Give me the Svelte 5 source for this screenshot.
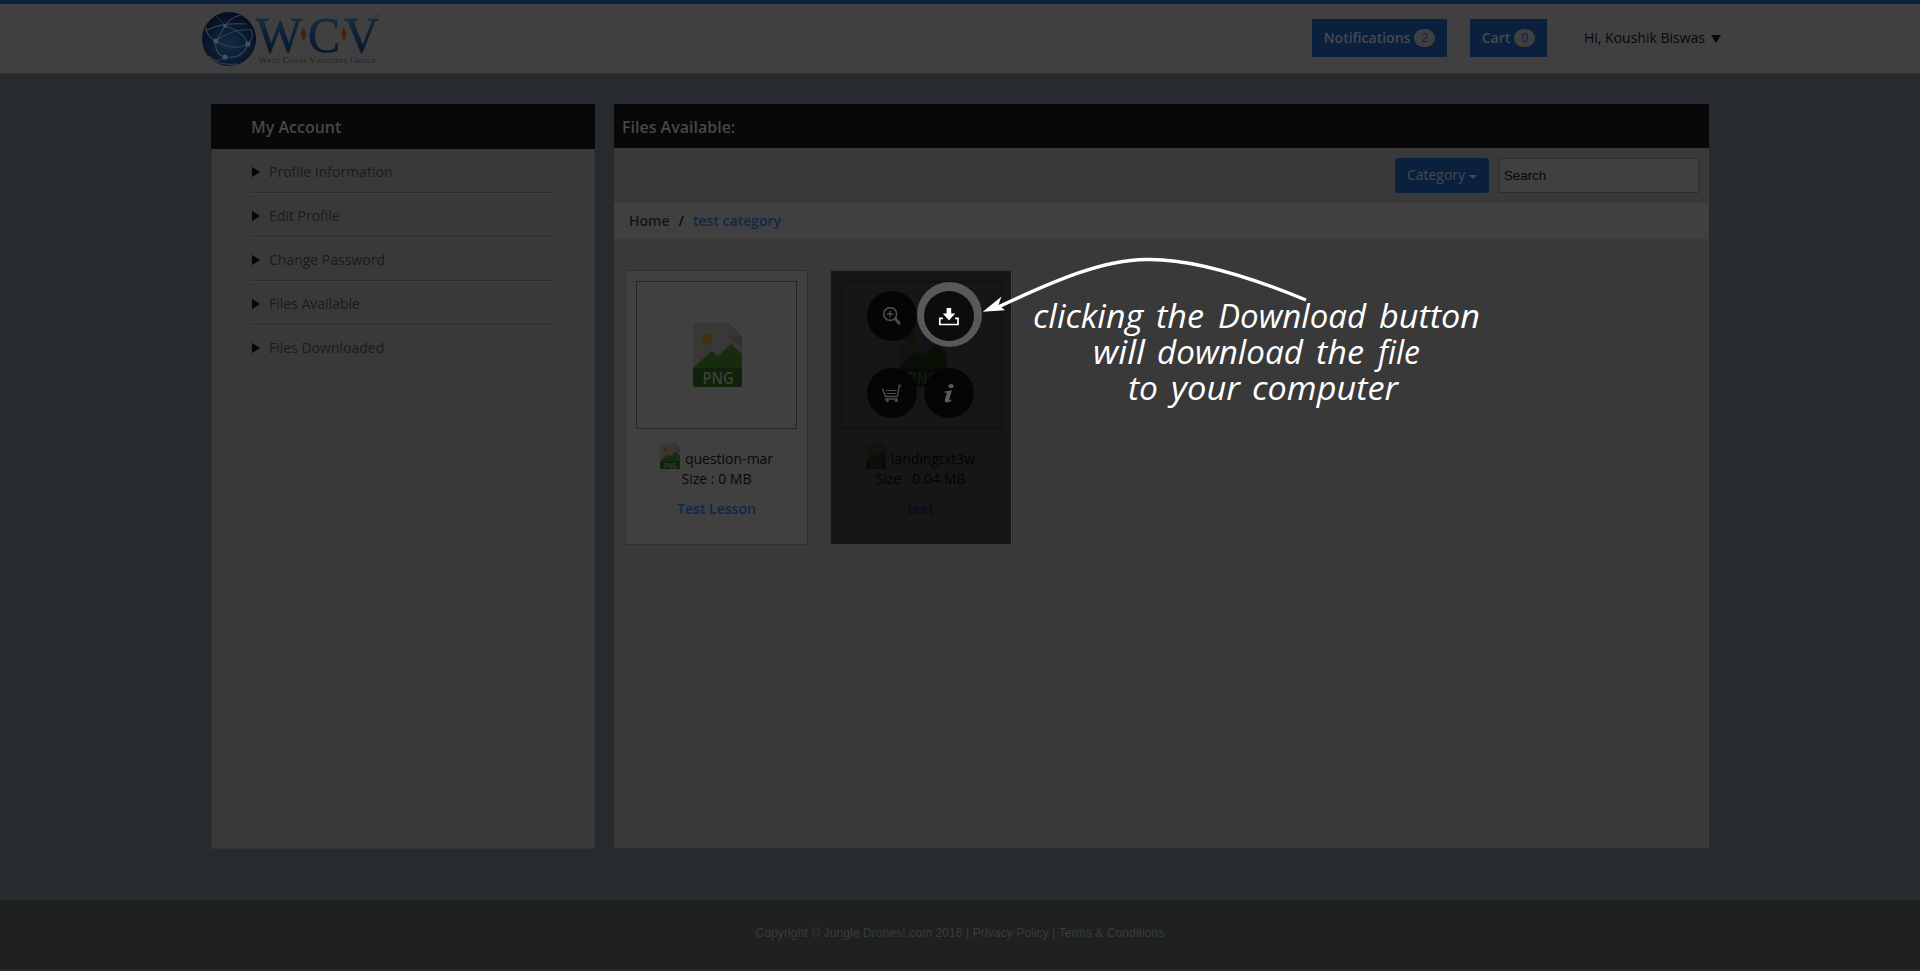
<script>
  const menu = ['Profile Information', 'Edit Profile', 'Change Password', 'Files Available', 'Files Downloaded'];

  const files = [
    { name: 'question-mar', size: '0 MB', lesson: 'Test Lesson', active: false },
    { name: 'landingtxt3w', size: '0.04 MB', lesson: 'test', active: true }
  ];

  const words = [
    { t: 'clicking', x: 1033, y: 328, w: 110 },
    { t: 'the', x: 1156, y: 328, w: 48 },
    { t: 'Download', x: 1218, y: 328, w: 148 },
    { t: 'button', x: 1379, y: 328, w: 101 },
    { t: 'will', x: 1093, y: 364, w: 52 },
    { t: 'download', x: 1157, y: 364, w: 146 },
    { t: 'the', x: 1316, y: 364, w: 48 },
    { t: 'file', x: 1378, y: 364, w: 42 },
    { t: 'to', x: 1128, y: 400, w: 30 },
    { t: 'your', x: 1171, y: 400, w: 69 },
    { t: 'computer', x: 1252, y: 400, w: 146 }
  ];
</script>

{#snippet png(cls)}
  <svg class={cls} viewBox="0 0 49 64">
    <path d="M2 0H36L49 13V45H0V2Q0 0 2 0Z" fill="#393837" />
    <path d="M35 0L49 14V24L35 14Z" fill="#302f2e" />
    <path d="M35 0L49 14H37Q35 14 35 12Z" fill="#373635" />
    <circle cx="14" cy="16" r="5.3" fill="#3f310d" />
    <path d="M0 45L19 28L25 33L38 21L49 31V46H0Z" fill="#172b0f" />
    <path d="M0 45H49V62Q49 64 47 64H2Q0 64 0 62Z" fill="#10230a" />
    <text x="9.5" y="60.5" textLength="31" lengthAdjust="spacingAndGlyphs">PNG</text>
  </svg>
{/snippet}

<div class="page">
  <header>
    <svg class="logo" viewBox="200 8 182 60">
      <defs>
        <radialGradient id="globe" cx=".5" cy=".6" r=".55">
          <stop offset="0" stop-color="#122d42" />
          <stop offset=".6" stop-color="#0a1c33" />
          <stop offset="1" stop-color="#060e20" />
        </radialGradient>
        <linearGradient id="ink" x1="0" y1="0" x2="0" y2="1">
          <stop offset=".15" stop-color="#173445" />
          <stop offset=".5" stop-color="#0b2036" />
          <stop offset=".85" stop-color="#09182b" />
        </linearGradient>
      </defs>
      <circle cx="229" cy="39" r="27" fill="url(#globe)" />
      <g fill="none" stroke="#35414b" stroke-width="1.2">
        <path d="M205 31Q222 22 246 24M216 41L225 26M216 41Q232 28 251 30M216 41Q232 52 248 44M225 26Q242 30 248 44M216 41Q206 36 206 27M216 41Q214 54 225 57M225 57Q242 60 248 44M225 26Q229 18 241 15M248 44Q255 38 251 29M209 56Q217 66 238 64" />
        <path d="M225 26Q220 18 216 17M225 57Q219 63 213 59" stroke-width=".8" />
      </g>
      <g fill="#46525a">
        <circle cx="216" cy="41" r="2.6" /><circle cx="225" cy="26" r="1.8" />
        <circle cx="248" cy="44" r="2.6" /><circle cx="225" cy="57" r="2.6" />
      </g>
      <g class="wcv">
        <text x="256" y="52" textLength="46" lengthAdjust="spacingAndGlyphs">W</text>
        <text x="308" y="52" textLength="32" lengthAdjust="spacingAndGlyphs">C</text>
        <text x="344" y="52" textLength="35" lengthAdjust="spacingAndGlyphs">V</text>
      </g>
      <path d="M303.5 27L306.5 34L303.5 41L300.5 34ZM344 27L347 34L344 41L341 34Z" fill="#48210d" />
      <g class="tag">
        <text x="258.5" y="62.5" textLength="117" lengthAdjust="spacingAndGlyphs">West Coast Ventures Group</text>
      </g>
      <text class="tm" x="374" y="18">™</text>
    </svg>
    <button class="top notif">Notifications <span>2</span></button>
    <button class="top">Cart <span>0</span></button>
    <div class="user">Hi, Koushik Biswas <i></i></div>
  </header>

  <main>
    <aside>
      <h2>My Account</h2>
      <ul>
        {#each menu as item}
          <li><i></i>{item}</li>
        {/each}
      </ul>
    </aside>

    <section>
      <h2>Files Available:</h2>
      <div class="tools">
        <button class="category">Category<i></i></button>
        <div class="search">Search</div>
      </div>
      <nav><b>Home</b><b>/</b><b class="here">test category</b></nav>
      <div class="files">
        {#each files as file}
          <article class:active={file.active}>
            <div class="thumb">{@render png('big')}</div>
            <div class="name">{@render png('small')}<span>{file.name}</span></div>
            <div class="size">Size : {file.size}</div>
            <div class="lesson">{file.lesson}</div>
            {#if file.active}
              <div class="shade"></div>
              <div class="actions">
                <div class="act">
                  <svg viewBox="0 0 50 50" fill="none" stroke="#4b4b4b">
                    <circle cx="23.2" cy="23" r="6.4" stroke-width="1.7" />
                    <path d="M23.2 19.8V26.2M20 23H26.4" stroke-width="1.5" />
                    <path d="M28.5 28L32 32" stroke-width="3" stroke-linecap="round" />
                  </svg>
                </div>
                <div class="act lit">
                  <svg viewBox="0 0 50 50">
                    <circle cx="25" cy="25" r="25" fill="#0c0c0c" />
                    <path d="M22.6 17H27.2V22.6H31.2L25 29.4L18.8 22.6H22.6Z" fill="#fff" />
                    <path d="M19 27.3H15.8V33.5H34V27.3H31" fill="none" stroke="#fff" stroke-width="1.7" />
                  </svg>
                </div>
                <div class="act">
                  <svg viewBox="0 0 50 50" fill="none" stroke="#4b4b4b" stroke-width="1.5">
                    <path d="M15.5 20.8L18.5 28.6H30.4L32.2 17.6H34.2M18 31H30.5" />
                    <path d="M19 22.5H29.5M20 25.5H29" stroke-width="1.1" />
                    <circle cx="20.3" cy="32.4" r="1.7" fill="#4b4b4b" stroke="none" />
                    <circle cx="29.3" cy="32.4" r="1.7" fill="#4b4b4b" stroke="none" />
                  </svg>
                </div>
                <div class="act">
                  <svg viewBox="0 0 50 50" fill="#5b5b5b">
                    <ellipse cx="27" cy="18.2" rx="2.5" ry="2.1" />
                    <path d="M20.6 23.6L28 22.2L25.2 31.6Q25 33.2 28.4 31Q26.3 34.6 23 34.6Q20 34.5 21 31L23 24.8L20.6 24.8Z" />
                  </svg>
                </div>
              </div>
            {/if}
          </article>
        {/each}
      </div>
    </section>
  </main>

  <footer>Copyright © Jungle Drones!.com 2016 | Privacy Policy | Terms &amp; Conditions</footer>

  <svg class="callout" viewBox="0 0 1920 971">
    <path d="M1306 300Q1204 258 1146 259.5C1104 260 1060 278 996 308" fill="none" stroke="#fff" stroke-width="3.4" />
    <path d="M982.8 311.7L1001.5 296.6L998.5 305L1005 310.3Z" fill="#fff" />
    {#each words as w}
      <text x={w.x} y={w.y} textLength={w.w} lengthAdjust="spacingAndGlyphs">{w.t}</text>
    {/each}
  </svg>
</div>

<style>
  :global(body) { background: #272a2e; overflow: hidden; }
  .page, .page * { box-sizing: border-box; }
  .page {
    position: relative;
    width: 1920px;
    height: 971px;
    display: flex;
    flex-direction: column;
    background: #272a2e;
    font: 14px/20px "Open Sans", sans-serif;
    color: #080808;
  }
  header {
    height: 74px;
    flex: none;
    display: flex;
    align-items: flex-start;
    padding-left: 200px;
    background: #404040;
    border-top: 4px solid #0a203d;
    border-bottom: 1px solid #353535;
  }
  .logo { width: 182px; height: 60px; margin: 4px 930px 0 0; }
  .wcv { font: 50px "Liberation Serif", serif; fill: url(#ink); stroke: #0b2036; stroke-width: .6; }
  .tag { font: small-caps 8.5px "Liberation Serif", serif; fill: #222; }
  .tm { font: 5px "Liberation Sans", sans-serif; fill: #1b2a35; }
  button { border: 0; padding: 0; background: #0a203d; color: #474a4d; }
  .top {
    height: 38px;
    width: 77px;
    margin-top: 15px;
    display: flex;
    align-items: center;
    justify-content: center;
    gap: 4px;
    font: 600 14px/20px "Open Sans", sans-serif;
  }
  .top.notif { width: 135px; margin-right: 23px; }
  .top span {
    width: 21px;
    height: 18px;
    border-radius: 9px;
    background: #404040;
    color: #0a203d;
    font: 13px/17px "Open Sans", sans-serif;
    text-align: center;
  }
  .user { display: flex; align-items: center; gap: 6px; margin: 24px 0 0 37px; white-space: nowrap; }
  .user i { border: 5px solid transparent; border-top: 8px solid #080808; border-bottom: 0; margin-top: 1px; }

  main { display: flex; gap: 19px; padding: 30px 0 0 211px; height: 826px; flex: none; }
  aside { width: 384px; height: 745px; background: #393939; border: 1px solid #333435; border-top: 0; }
  h2 { margin: 0; background: #080808; color: #474747; font: 600 16px/46px "Open Sans", sans-serif; }
  aside h2 { height: 45px; margin: 0 -1px; padding-left: 40px; }
  ul { list-style: none; margin: 0 40px 0 39px; padding: 0; }
  li { height: 44px; display: flex; align-items: center; color: #1b1b1b; border-bottom: 1px solid #2c2c2c; box-shadow: 0 1px #404040; padding-top: 2px; }
  li:last-child { border: 0; box-shadow: none; }
  li i { border: 5px solid transparent; border-left: 8px solid #050505; border-right: 0; margin: 0 9px 0 1px; }
  section { width: 1095px; height: 744px; background: #393939; }
  section h2 { height: 44px; padding-left: 8px; }
  .tools { height: 55px; display: flex; justify-content: flex-end; gap: 10px; padding: 10px 10px 0; }
  .category {
    width: 94px;
    height: 35px;
    border-radius: 4px;
    display: flex;
    align-items: center;
    justify-content: center;
    gap: 4px;
    padding-bottom: 2px;
    font: 14px/20px "Open Sans", sans-serif;
  }
  .category i { border: 4px solid transparent; border-top-color: #474a4d; border-bottom: 0; margin-top: 4px; }
  .search { width: 200px; height: 35px; border: 1px solid #2c2c2c; background: #404040; padding-left: 4px; font: 13.3px/33px "Liberation Sans", sans-serif; }
  nav { height: 36px; background: #404040; display: flex; gap: 9px; padding: 8px 15px; }
  nav b { font-weight: 600; }
  nav b:first-child { color: #141414; }
  nav .here { color: #10274a; }
  .files { display: flex; gap: 22px; padding: 31px 11px; }
  article {
    position: relative;
    width: 183px;
    height: 275px;
    padding: 10px;
    background: #404040;
    border: 1px solid #303030;
    text-align: center;
  }
  article.active { border-color: #353535; }
  .thumb { width: 161px; height: 148px; border: 1px solid #252525; padding: 41px 0 0 1px; }
  :global(.big) { width: 49px; height: 64px; display: block; margin: 0 auto; }
  :global(.small) { width: 20px; height: 26px; }
  :global(.big text), :global(.small text) { font: 600 17px "Open Sans", sans-serif; fill: #3b4238; }
  .name { height: 26px; margin-top: 14px; display: flex; justify-content: center; gap: 5px; }
  .name span { margin-top: 6px; }
  .active .name, .active .size, .active .lesson { margin-left: -2px; }
  .lesson { margin-top: 10px; font-weight: 600; color: #0c284e; }
  .shade { position: absolute; inset: 0 1px 0 0; background: rgba(0, 0, 0, .65); }
  .actions {
    position: absolute;
    top: 20px;
    left: 36px;
    display: grid;
    grid-template-columns: 50px 50px;
    gap: 27px 7px;
  }
  .act { width: 50px; height: 50px; border-radius: 50%; background: rgba(4, 4, 4, .95); }
  .act svg { position: relative; display: block; width: 50px; height: 50px; }
  .lit { position: relative; }
  .lit::before {
    content: "";
    position: absolute;
    left: -7px;
    top: -9px;
    width: 65px;
    height: 65px;
    border-radius: 50%;
    background: #595959;
  }
  footer {
    height: 69px;
    flex: none;
    background: #1f2120;
    color: #3a3b3b;
    text-align: center;
    font: 12px/66px "Liberation Sans", sans-serif;
    letter-spacing: .1px;
  }
  .callout { position: absolute; inset: 0; width: 1920px; height: 971px; pointer-events: none; }
  .callout text { font: italic 400 33px "Open Sans", sans-serif; fill: #fff; }
</style>
